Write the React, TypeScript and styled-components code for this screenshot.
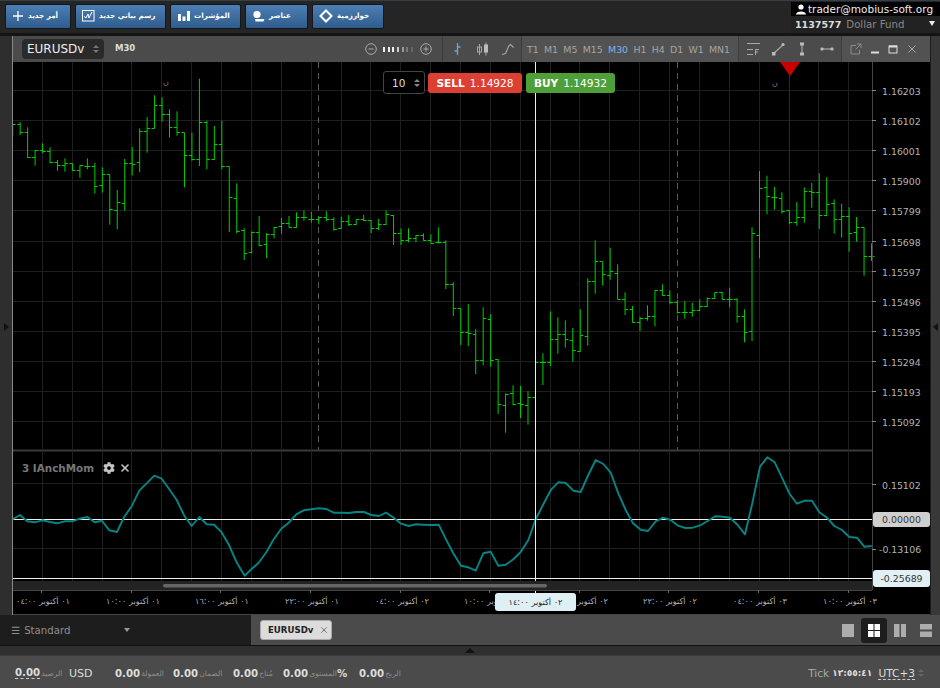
import React from "react";
import styled, { createGlobalStyle } from "styled-components";
import { FaCog } from "react-icons/fa";
import { X } from "lucide-react";

const FONT = `"DejaVu Sans", "Noto Sans", sans-serif`;

const Global = createGlobalStyle`
  html, body { margin: 0; padding: 0; background: #2a2a2a; }
  body { font-family: ${FONT}; }
  * { box-sizing: border-box; }
`;

const Page = styled.div`
  width: 940px; height: 688px; overflow: hidden; display: flex; flex-direction: column; background: #2a2a2a;
`;
const TopBar = styled.header`
  height: 33px; flex: none; display: flex; background: #252525; border-top: 1px solid #33404a;
`;
const Buttons = styled.nav`
  display: flex; gap: 4px; padding: 3px 0 0 5px; flex: 1;
`;
const TopButton = styled.button<{ $w: number }>`
  width: ${(p) => p.$w}px; height: 25px; padding: 0 0 2px 6px; display: flex; align-items: center; gap: 4px; white-space: nowrap;
  border: 1px solid #10171f; border-radius: 2px; color: #fff; font: bold 7.2px ${FONT};
  background: linear-gradient(#4d7fb4, #2f5c8c);
`;
const User = styled.div`
  width: 149px; display: flex; flex-direction: column; color: #fff; margin-top: 1px;
`;
const UserMail = styled.div`
  height: 14px; background: #000; display: flex; align-items: center; gap: 2px; padding-left: 5px; font-size: 10.5px; color: #eee;
`;
const UserFund = styled.div`
  flex: 1; display: flex; align-items: center; padding: 0 0 1px 4px; font-size: 10.2px; color: #888; gap: 5px; position: relative; background: #222;
`;
const FundId = styled.b`
  color: #ddd; font-weight: bold; font-size: 9.5px;
`;
const Caret = styled.span`
  position: absolute; right: 5px; top: 5px; border-style: solid; border-width: 5px 3px 0; border-color: #eee transparent transparent;
`;
const Rule = styled.div`
  height: 3px; flex: none; background: #141414;
`;
const Middle = styled.div`
  flex: 1; display: flex; min-height: 0;
`;
const SideStrip = styled.div<{ $w: number; $right?: boolean }>`
  width: ${(p) => p.$w}px; flex: none; background: ${(p) => (p.$right ? "#383838" : "#2e2e2e")}; display: flex; align-items: center;
  justify-content: center; padding-top: 3px;
  border-left: ${(p) => (p.$right ? "1px solid #1c1c1c" : "0")};
`;
const SideArrowRight = styled.span`
  border-style: solid; border-width: 4px 0 4px 5px; border-color: transparent transparent transparent #111;
`;
const SideArrowLeft = styled.span`
  border-style: solid; border-width: 4px 5px 4px 0; border-color: transparent #111 transparent transparent;
`;
const Main = styled.main`
  flex: 1; display: flex; flex-direction: column; min-width: 0; border-left: 1px solid #888;
`;
const Toolbar = styled.div`
  height: 26px; flex: none; display: flex; align-items: center; background: #4b4b4b; padding-left: 9px;
`;
const SymbolSelect = styled.div`
  width: 82px; height: 20px; border-radius: 4px; background: #2a2a2a; color: #eee; font-size: 12px; display: flex; align-items: center; padding-left: 5px; justify-content: space-between; padding-right: 5px;
`;
const Arrows = styled.span`
  display: flex; flex-direction: column; gap: 2px;
`;
const ArrowUp = styled.i<{ $c?: string }>`
  display: block; border-style: solid; border-width: 0 3px 3px; border-color: transparent transparent ${(p) => p.$c || "#777"};
`;
const ArrowDown = styled.i<{ $c?: string }>`
  display: block; border-style: solid; border-width: 3px 3px 0; border-color: ${(p) => p.$c || "#777"} transparent transparent;
`;
const Period = styled.b`
  margin-left: 11px; font-size: 8.5px; color: #ddd; margin-bottom: 2px;
`;
const Group = styled.div<{ $shade?: string; $pad?: string; $gap?: number; $auto?: boolean; $w?: number }>`
  height: 100%; display: flex; align-items: center; flex: none;
  ${(p) => (p.$w ? `width:${p.$w}px;` : "")}
  background: ${(p) => p.$shade || "#4b4b4b"};
  padding: ${(p) => p.$pad || "0"}; gap: ${(p) => p.$gap || 0}px;
  ${(p) => (p.$auto ? "margin-left:auto;" : "border-left:1px solid #3d3d3d;")}
`;
const Frame = styled.span<{ $on?: boolean }>`
  font-size: 9.4px; color: ${(p) => (p.$on ? "#7db4ea" : "#a5a5a5")};
`;
const ZoomDots = styled.div`
  display: flex; gap: 2.67px; align-items: center; margin: 0 7px 0 6px;
`;
const ZoomDot = styled.i<{ $c: string }>`
  width: 2px; height: 5px; background: ${(p) => p.$c}; display: block;
`;
const ChartFrame = styled.div`
  position: relative; flex: 1; background: #000; min-height: 0;
`;
const ChartSvg = styled.svg`
  display: block; width: 100%; height: 100%;
`;
const AxisText = styled.text`
  font: 9.4px ${FONT}; fill: #b4b4b4;
`;
const TimeText = styled.text`
  font: 8.2px ${FONT}; fill: #b0b0b0;
`;
const Mark = styled.text`
  font: 8px ${FONT}; fill: #777;
`;
const OrderPanel = styled.div`
  position: absolute; left: 370px; top: 9px; display: flex; align-items: center; gap: 3px;
`;
const Qty = styled.div`
  width: 42px; height: 23px; background: #000; border: 1px solid #444; border-radius: 3px; color: #ddd; font-size: 10.5px;
  display: flex; align-items: center; justify-content: space-between; padding: 0 4px 0 8px;
`;
const Trade = styled.button<{ $bg: string; $w: number }>`
  width: ${(p) => p.$w}px; height: 20px; border: 0; border-radius: 3px; background: ${(p) => p.$bg}; color: #fff; font: 10.6px ${FONT};
  display: flex; align-items: center; justify-content: center; gap: 5px; padding: 0; margin-left: ${(p) => (p.$w === 89 ? "1px" : "0")};
`;
const Legend = styled.div`
  position: absolute; left: 9px; top: 400px; display: flex; align-items: center; gap: 4px; color: #777; font: bold 10.4px ${FONT};
`;
const LegendLabel = styled.span`
  margin-right: 5px;
`;
const Badge = styled.div<{ $bg: string; $top: number; $h: number }>`
  position: absolute; left: 860px; top: ${(p) => p.$top}px; width: 57px; height: ${(p) => p.$h}px; background: ${(p) => p.$bg}; color: #333;
  border-radius: 3px; font-size: 9.4px; display: flex; align-items: center; justify-content: center;
`;
const TimeTip = styled.div`
  position: absolute; left: 482px; top: 531px; width: 81px; height: 18px; background: #dff0f5; color: #222; border-radius: 3px; font-size: 8.2px;
  display: flex; align-items: center; justify-content: center;
`;
const TabBar = styled.div`
  height: 31px; flex: none; display: flex; border-bottom: 1px solid #111;
`;
const LayoutPick = styled.div`
  width: 251px; background: #1d1d1d; display: flex; align-items: center; color: #8f8f8f; font-size: 10.2px; padding: 0 0 0 11px; gap: 4px; position: relative;
`;
const PickCaret = styled.span`
  position: absolute; left: 124px; top: 13px; border-style: solid; border-width: 4px 3.5px 0; border-color: #999 transparent transparent;
`;
const TabArea = styled.div`
  flex: 1; background: #4b4b4b; display: flex; align-items: center; padding-left: 9px;
`;
const Tab = styled.div`
  width: 72px; height: 20px; background: #dcdcdc; border-radius: 3px; border: 1px solid #aaa; color: #222; font: bold 8.6px ${FONT};
  display: flex; align-items: center; padding-left: 7px; gap: 6px;
`;
const Views = styled.div`
  margin-left: auto; display: flex; align-items: center; padding-right: 1.5px;
`;
const ViewBtn = styled.div<{ $on?: boolean }>`
  width: 26px; height: 25px; border-radius: 3px; display: flex; align-items: center; justify-content: center; background: ${(p) => (p.$on ? "#1d1d1d" : "transparent")};
`;
const Splitter = styled.div`
  height: 10px; flex: none; background: #2f2f2f; display: flex; justify-content: center; align-items: center; border-bottom: 1px solid #3c3c3c;
`;
const SplitArrow = styled.span`
  border-style: solid; border-width: 0 5px 5px; border-color: transparent transparent #111;
`;
const Status = styled.footer`
  height: 32px; flex: none; background: #4b4b4b; display: flex; align-items: center; padding: 2px 16px 0 15px; color: #ddd; font-size: 11px;
`;
const Stat = styled.div<{ $w?: number }>`
  display: flex; align-items: center; flex: none; ${(p) => (p.$w ? `width:${p.$w}px;` : "")}
`;
const StatValue = styled.b<{ $dash?: boolean }>`
  font-size: 10.2px; color: #ddd; ${(p) => (p.$dash ? "border-bottom:1px dashed #ccc;" : "")}
`;
const StatName = styled.span`
  font-size: 7.6px; color: #8e8e8e; margin-left: 1px;
`;
const Tick = styled.div`
  margin-left: auto; display: flex; align-items: center; gap: 3px; color: #a8a8a8; font-size: 10.6px;
`;
const Clock = styled.b`
  color: #ddd; font-size: 9px; margin-right: 3px;
`;
const Utc = styled.span`
  color: #ddd; font-size: 10.6px; border-bottom: 1px dashed #ccc;
`;

// Bars are read as [high, low, open, close] in 3x crop units of three crops of the picture.
const S1: number[][] = [[163,197,163,163],[157,195,163,186],[172,264,186,262],[240,287,262,240],[220,250,242,244],[232,280,244,278],[270,302,278,286],[265,305,286,281],[280,303,281,301],[286,323,301,287],[265,298,290,290],[278,371,290,349],[292,368,346,314],[314,464,314,418],[360,478,421,397],[267,422,399,281],[231,316,281,284],[175,307,278,183],[141,248,183,176],[76,176,176,107],[82,155,107,133],[118,203,133,172],[124,197,172,186],[188,352,188,257],[188,272,257,268],[26,288,268,157],[152,298,157,268],[168,270,268,223],[152,298,223,289],[289,486,289,382],[340,490,385,484],[475,570,482,550],[484,550,548,486],[438,529,488,527],[490,565,524,494],[470,505,493,472],[444,491,469,461],[438,473,461,472],[427,473,472,441],[421,452,441,441]];
const S2: number[][] = [[96,128,118,118],[110,133,118,113],[94,124,113,118],[112,152,118,148],[110,147,146,124],[105,138,124,133],[118,134,133,118],[105,123,118,121],[120,159,121,146],[116,150,146,133],[91,134,133,103],[105,195,105,160],[145,195,160,181],[145,187,181,175],[165,187,175,166],[160,182,166,181],[163,190,181,189],[142,191,187,188],[181,327,187,313],[307,408,313,385],[385,495,385,457],[372,498,457,460],[447,582,463,541],[382,556,541,415],[403,560,418,540],[538,702,538,673],[640,758,676,643],[616,676,640,672],[618,714,670,672],[634,734,676,652],[548,652,652,548],[520,615,548,547],[394,558,547,478],[412,521,478,463],[421,503,463,478],[444,545,481,511],[388,515,514,466],[295,497,469,303],[181,341,303,244],[245,317,244,284],[203,299,287,275],[253,358,279,357]];
const S3: number[][] = [[397,465,417,448],[438,488,448,487],[470,513,487,476],[436,482,476,469],[391,499,469,392],[373,407,392,406],[391,433,406,428],[420,461,428,457],[423,476,457,457],[429,470,457,451],[418,453,451,439],[412,441,439,414],[397,417,414,398],[396,418,398,417],[383,442,417,417],[415,488,417,469],[448,547,469,517],[202,543,514,220],[33,295,226,84],[47,163,82,109],[81,149,112,112],[97,161,115,155],[151,192,151,187],[126,197,187,173],[82,188,173,93],[69,143,93,97],[40,207,97,166],[52,168,166,133],[118,221,131,178],[131,233,178,170],[142,275,170,220],[171,245,218,203],[202,347,202,288],[250,303,289,289]];

const toScreen = (rows: number[][], base: number) => rows.map((r) => r.map((v) => base + v / 3));
const BARS = [...toScreen(S1, 70), ...toScreen(S2, 180), ...toScreen(S3, 160)];
const barX = (i: number) => 12.7 + 7.468 * i;

const barPath = BARS.map((b, i) => {
  const x = barX(i);
  const oy = Math.floor(b[2]) + 0.5;
  const cy = Math.floor(b[3]) + 0.5;
  return `M${x.toFixed(2)} ${b[0].toFixed(1)}V${b[1].toFixed(1)}M${(x - 3).toFixed(2)} ${oy}H${x.toFixed(2)}M${x.toFixed(2)} ${cy}H${(x + 3).toFixed(2)}`;
}).join("");

const L1 = [[38,208],[60,195],[82,214],[104,217],[127,211],[150,216],[172,220],[194,214],[217,214],[239,206],[262,201],[284,217],[306,212],[328,241],[351,246],[373,200],[396,167],[418,122],[440,100],[463,77],[485,86],[508,118],[530,150],[553,197],[575,228],[598,201],[620,223],[642,224],[664,245],[687,285],[709,335],[734,377],[754,358],[776,338],[799,307],[821,268],[844,236],[866,218],[889,193],[911,181],[933,178],[957,175],[979,177],[1001,188],[1023,188],[1046,189],[1068,186],[1092,186],[1114,195],[1136,198],[1159,188],[1181,203],[1203,221],[1226,228],[1248,223],[1270,224],[1292,225],[1316,224],[1338,268],[1360,310],[1383,347],[1405,352]];
const L2 = [[17,362],[40,310],[62,305],[85,347],[107,344],[130,328],[152,306],[175,270],[197,208],[220,163],[243,119],[265,97],[287,99],[310,122],[332,126],[355,75],[377,30],[400,42],[422,68],[445,130],[467,180],[489,220],[512,239],[534,243],[557,214],[579,203],[602,210],[624,227],[646,234],[668,233],[691,226],[713,213],[735,199],[758,200],[780,203],[803,225],[825,253],[847,160],[870,50],[892,22],[914,37],[937,85],[959,132],[981,161],[1004,152],[1026,152],[1048,187],[1071,203],[1093,228],[1116,240],[1138,261],[1161,263],[1183,290],[1205,288]];
const linePoints = [
  ...L1.map(([x, y]) => `${(x / 3).toFixed(1)},${(450 + y / 3).toFixed(1)}`),
  ...L2.map(([x, y]) => `${(470 + x / 3).toFixed(1)},${(450 + y / 3).toFixed(1)}`),
].join(" ");

const VGRID = Array.from({ length: 28 }, (_, i) => Math.round(42.3 + 29.87 * i - 0.5) + 0.5);
const PRICES = ["1.16203","1.16102","1.16001","1.15900","1.15799","1.15698","1.15597","1.15496","1.15395","1.15294","1.15193","1.15092"];
const priceY = (i: number) => Math.floor(90.7 + 30.07 * i) + 0.5;
const TIMES: [number, string][] = [
  [43,"٠١ أكتوبر ٠٤:٠٠"],[133,"٠١ أكتوبر ١٠:٠٠"],[222,"٠١ أكتوبر ١٦:٠٠"],[312,"٠١ أكتوبر ٢٢:٠٠"],[402,"٠٢ أكتوبر ٠٤:٠٠"],
  [491,"٠٢ أكتوبر ١٠:٠٠"],[581,"٠٢ أكتوبر ١٦:٠٠"],[670,"٠٢ أكتوبر ٢٢:٠٠"],[760,"٠٣ أكتوبر ٠٤:٠٠"],[850,"٠٣ أكتوبر ١٠:٠٠"],
];

const Chart = () => (
  <ChartSvg viewBox="13 62 917 553" preserveAspectRatio="none">
    <g stroke="#1f1f1f" strokeWidth={1} fill="none">
      {VGRID.map((x) => <path key={x} d={`M${x} 62V449M${x} 452V581`} />)}
      {PRICES.map((_, i) => <path key={i} d={`M13 ${priceY(i)}H872`} />)}
      <path d="M13 483.5H872M13 548.5H872" />
    </g>
    <path d="M318.5 62V450M677.5 62V450" stroke="#5a5a5a" strokeDasharray="6 5" />
    <path d="M789.5 62V450" stroke="#2a2a2a" />
    <path d={barPath} stroke="#00cf00" strokeWidth={1} fill="none" />
    <Mark x={163} y={85}>ں</Mark>
    <Mark x={772} y={86}>ں</Mark>
    <polygon points="780,62 800,62 790,76" fill="#c80000" />
    <path d="M13 450.5H872" stroke="#3a3a3a" strokeWidth={2} />
    <path d="M13 519.5H872M13 578.5H872" stroke="#eee" />
    <polyline points={linePoints} fill="none" stroke="#078484" strokeWidth={1.9} strokeLinejoin="round" />
    <path d="M535.5 62V593" stroke="#eee" />
    <rect x={13} y={581} width={859} height={9} fill="#232323" />
    <rect x={163} y={584} width={384} height={3.5} rx={1.7} fill="#666" />
    <path d="M872.5 62V590M13 590.5H872M13 614.5H930" stroke="#444" />
    {PRICES.map((p, i) => (
      <g key={p}>
        <path d={`M872 ${priceY(i)}H876`} stroke="#888" />
        <AxisText x={882} y={priceY(i) + 4}>{p}</AxisText>
      </g>
    ))}
    <path d="M872 484.5H876M872 549.5H876" stroke="#888" />
    <AxisText x={882} y={489}>0.15102</AxisText>
    <AxisText x={879} y={553}>-0.13106</AxisText>
    {TIMES.map(([x, t]) => (
      <g key={x}>
        <path d={`M${x - 1.5} 590V593`} stroke="#666" />
        <TimeText x={x} y={604} textAnchor="middle">{t}</TimeText>
      </g>
    ))}
  </ChartSvg>
);

const W = { stroke: "#fff", fill: "none" };
const G = { stroke: "#a8a8a8", fill: "none" };
const Ico = ({ children, w = 14, h = 14 }: { children: React.ReactNode; w?: number; h?: number }) => (
  <svg width={w} height={h} viewBox={`0 0 ${w} ${h}`} style={{ flex: "none", display: "block" }}>{children}</svg>
);

const View = ({ kind }: { kind: number }) => (
  <Ico w={14} h={13}>
    {kind === 0 && <rect x="1" width="12" height="13" fill="#adadad" />}
    {kind === 1 && <path d="M1 0h5.5v6H1zM7.5 0H13v6H7.5zM1 7h5.5v6H1zM7.5 7H13v6H7.5z" fill="#fff" />}
    {kind === 2 && <path d="M1 0h5.5v13H1zM8 0h5v13H8z" fill="#adadad" />}
    {kind === 3 && <path d="M1 0h12v5.5H1zM1 7.5h12V13H1z" fill="#adadad" />}
  </Ico>
);

export default function App() {
  return (
    <Page>
      <Global />
      <TopBar>
        <Buttons>
          <TopButton $w={66}>
            <Ico w={12} h={12}><path d="M6 1v10M1 6h10" {...W} strokeWidth={1.3} /></Ico>
            <span>أمر جديد</span>
          </TopButton>
          <TopButton $w={91}>
            <Ico w={13} h={13}><rect x=".5" y="1.5" width="11.5" height="10.5" {...W} /><path d="M2 7.5l2 1.5 2-4 1 4 3-6" {...W} /></Ico>
            <span>رسم بياني جديد</span>
          </TopButton>
          <TopButton $w={71}>
            <Ico w={13} h={13}><path d="M1 5h3v7H1zM5.5 7.5h3V12h-3zM10 2h3v10h-3z" fill="#fff" /></Ico>
            <span>المؤشرات</span>
          </TopButton>
          <TopButton $w={63}>
            <Ico w={13} h={13}><circle cx="5" cy="5.5" r="3.6" fill="#fff" /><path d="M3 10h9.5l-1 2.5h-8z" fill="#fff" /></Ico>
            <span>عناصر</span>
          </TopButton>
          <TopButton $w={72}>
            <Ico w={14} h={14}><path d="M7 1.5L12.5 7 7 12.5 1.5 7z" {...W} strokeWidth={2} /></Ico>
            <span>خوارزمية</span>
          </TopButton>
        </Buttons>
        <User>
          <UserMail>
            <Ico w={10} h={11}><circle cx="5" cy="3" r="2.6" fill="#fff" /><path d="M0 10.5c0-4 10-4 10 0z" fill="#fff" /></Ico>
            <span>trader@mobius-soft.org</span>
          </UserMail>
          <UserFund>
            <FundId>1137577</FundId>
            <span>Dollar Fund</span>
            <Caret />
          </UserFund>
        </User>
      </TopBar>
      <Rule />
      <Middle>
        <SideStrip $w={12}><SideArrowRight /></SideStrip>
        <Main>
          <Toolbar>
            <SymbolSelect>
              <span>EURUSDv</span>
              <Arrows><ArrowUp /><ArrowDown /></Arrows>
            </SymbolSelect>
            <Period>M30</Period>
            <Group $auto $pad="0 10px 0 0">
              <Ico w={12} h={12}><circle cx="6" cy="6" r="5.3" {...G} /><path d="M3.5 6h5" {...G} /></Ico>
              <ZoomDots>
                {["#eee","#eee","#eee","#ccc","#999","#777","#666"].map((c, i) => <ZoomDot key={i} $c={c} />)}
              </ZoomDots>
              <Ico w={12} h={12}><circle cx="6" cy="6" r="5.3" {...G} /><path d="M3.5 6h5M6 3.5v5" {...G} /></Ico>
            </Group>
            <Group $pad="0 0 0 6px" $gap={10} $w={79}>
              <Ico w={16} h={14}><path d="M8.5 1v12M5.5 9h3M8.5 5h3" stroke="#6ea4d8" strokeWidth={1.3} fill="none" /></Ico>
              <Ico w={16} h={14}><path d="M4.5 2v11M11 0.5v13" {...G} /><rect x="2.5" y="5" width="4" height="5" {...G} /><rect x="9" y="2.5" width="4" height="8" fill="#bbb" /></Ico>
              <Ico w={14} h={14}><path d="M1 12.5l3.5-1 3.5-8 1.5-1 3 3" {...G} strokeWidth={1.1} /></Ico>
            </Group>
            <Group $pad="0 0 0 5px" $gap={5.3} $shade="#525252" $w={217}>
              {["T1","M1","M5","M15","M30","H1","H4","D1","W1","MN1"].map((t) => (
                <Frame key={t} $on={t === "M30"}>{t}</Frame>
              ))}
            </Group>
            <Group $pad="0 0 0 7px" $gap={10.5} $w={103}>
              <Ico><path d="M1 1.5h13M1 7.5h6M1 12.5h6" {...G} /><path d="M9.5 13V7.5H13M9.5 10H12" {...G} /></Ico>
              <Ico><path d="M3 11L12 3" {...G} strokeWidth={1.2} /><rect x="1" y="10" width="3.5" height="3.5" fill="#bbb" /><circle cx="12" cy="2.5" r="1.6" fill="#bbb" /></Ico>
              <Ico><path d="M7 2v10" {...G} strokeWidth={1.2} /><rect x="5" y="0.5" width="4" height="3" fill="#bbb" /><rect x="5" y="10.5" width="4" height="3" fill="#bbb" /></Ico>
              <Ico><path d="M2 7h10" {...G} strokeWidth={1.2} /><rect x="0.5" y="5.5" width="3" height="3" rx="1" fill="#bbb" /><rect x="10.5" y="5.5" width="3" height="3" rx="1" fill="#bbb" /></Ico>
            </Group>
            <Group $pad="0 0 0 8px" $gap={6.7} $w={89} $shade="#525252">
              <Ico w={12} h={12}><path d="M9.5 7v4H1V2.5h5M7 1h4v4M11 1L5.5 6.5" stroke="#8a8a8a" fill="none" /></Ico>
              <Ico w={12} h={12}><path d="M2 9.5h8" stroke="#ddd" strokeWidth={2} /></Ico>
              <Ico w={12} h={12}><rect x="2" y="3" width="8" height="7" stroke="#ddd" fill="none" /><path d="M2 3.5h8" stroke="#ddd" strokeWidth={2} /></Ico>
              <Ico w={12} h={12}><path d="M2.5 2.5l7 7M9.5 2.5l-7 7" stroke="#a5a5a5" fill="none" /></Ico>
            </Group>
          </Toolbar>
          <ChartFrame>
            <Chart />
            <OrderPanel>
              <Qty>
                <span>10</span>
                <Arrows><ArrowUp $c="#888" /><ArrowDown $c="#888" /></Arrows>
              </Qty>
              <Trade $bg="#dc4032" $w={94}><b>SELL</b><span>1.14928</span></Trade>
              <Trade $bg="#4f9f39" $w={89}><b>BUY</b><span>1.14932</span></Trade>
            </OrderPanel>
            <Legend>
              <LegendLabel>3 IAnchMom</LegendLabel>
              <FaCog size={12} color="#c4c4c4" />
              <X size={12} color="#c4c4c4" strokeWidth={3.2} />
            </Legend>
            <Badge $bg="#cfcfcf" $top={450} $h={15}>0.00000</Badge>
            <Badge $bg="#e0f0f5" $top={508} $h={17}>-0.25689</Badge>
            <TimeTip>٠٢ أكتوبر ١٤:٠٠</TimeTip>
          </ChartFrame>
        </Main>
        <SideStrip $w={10} $right><SideArrowLeft /></SideStrip>
      </Middle>
      <TabBar>
        <LayoutPick>
          <span>☰</span>
          <span>Standard</span>
          <PickCaret />
        </LayoutPick>
        <TabArea>
          <Tab>
            <span>EURUSDv</span>
            <X size={10} color="#333" strokeWidth={1.4} />
          </Tab>
          <Views>
            <ViewBtn><View kind={0} /></ViewBtn>
            <ViewBtn $on><View kind={1} /></ViewBtn>
            <ViewBtn><View kind={2} /></ViewBtn>
            <ViewBtn><View kind={3} /></ViewBtn>
          </Views>
        </TabArea>
      </TabBar>
      <Splitter><SplitArrow /></Splitter>
      <Status>
        <Stat $w={54}><StatValue $dash>0.00</StatValue><StatName>الرصيد</StatName></Stat>
        <Stat $w={46}><span>USD</span></Stat>
        <Stat $w={58}><StatValue>0.00</StatValue><StatName>العمولة</StatName></Stat>
        <Stat $w={60}><StatValue>0.00</StatValue><StatName>الضمان</StatName></Stat>
        <Stat $w={50}><StatValue>0.00</StatValue><StatName>مُتاح</StatName></Stat>
        <Stat $w={76}><StatValue>0.00</StatValue><StatName>المستوى</StatName><StatValue>%</StatValue></Stat>
        <Stat><StatValue>0.00</StatValue><StatName>الربح</StatName></Stat>
        <Tick>
          <span>Tick</span>
          <Clock>١٢:٥٥:٤١</Clock>
          <Utc>UTC+3</Utc>
          <Arrows><ArrowUp $c="#666" /><ArrowDown $c="#666" /></Arrows>
        </Tick>
      </Status>
    </Page>
  );
}
